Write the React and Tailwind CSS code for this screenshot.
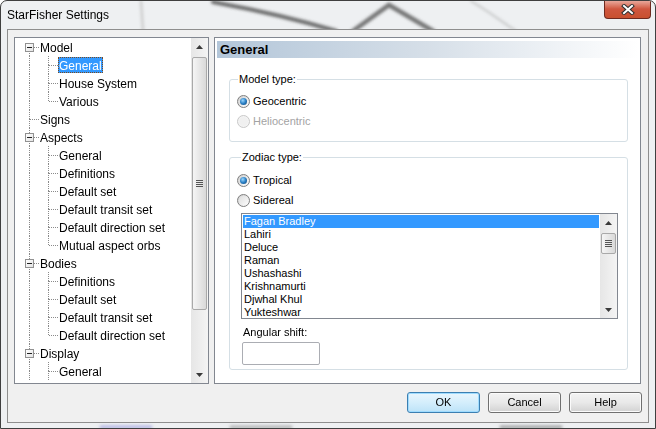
const tree = [
  { label: "Model", level: 0, exp: true, first: true },
  { label: "General", level: 1, sel: true },
  { label: "House System", level: 1 },
  { label: "Various", level: 1, last: true },
  { label: "Signs", level: 0 },
  { label: "Aspects", level: 0, exp: true },
  { label: "General", level: 1 },
  { label: "Definitions", level: 1 },
  { label: "Default set", level: 1 },
  { label: "Default transit set", level: 1 },
  { label: "Default direction set", level: 1 },
  { label: "Mutual aspect orbs", level: 1, last: true },
  { label: "Bodies", level: 0, exp: true },
  { label: "Definitions", level: 1 },
  { label: "Default set", level: 1 },
  { label: "Default transit set", level: 1 },
  { label: "Default direction set", level: 1, last: true },
  { label: "Display", level: 0, exp: true },
  { label: "General", level: 1 },
];

const zodiacs = [
  "Fagan Bradley",
  "Lahiri",
  "Deluce",
  "Raman",
  "Ushashashi",
  "Krishnamurti",
  "Djwhal Khul",
  "Yukteshwar",
];

function Slot({ top, bottom, branch, box }) {
  return (
    <span className="relative h-[18px] w-[19px] shrink-0">
      {top && (
        <span className="absolute left-[9px] top-0 h-[9px] border-l border-dotted border-[#8a8a8a]" />
      )}
      {bottom && (
        <span className="absolute left-[9px] top-[9px] h-[9px] border-l border-dotted border-[#8a8a8a]" />
      )}
      {branch && (
        <span className="absolute left-[10px] top-[9px] w-[9px] border-t border-dotted border-[#8a8a8a]" />
      )}
      {box && (
        <span className="absolute left-[5px] top-[5px] flex h-[9px] w-[9px] items-center justify-center border border-[#919191] bg-linear-to-br from-white to-[#e4e4e4]">
          <span className="h-px w-[5px] bg-[#222]" />
        </span>
      )}
    </span>
  );
}

function TreeRow({ item }) {
  return (
    <div className="flex h-[18px] items-center">
      {item.level === 0 ? (
        <Slot top={!item.first} bottom branch box={item.exp} />
      ) : (
        <>
          <Slot top bottom />
          <Slot top bottom={!item.last} branch />
        </>
      )}
      <span
        className={
          item.sel
            ? "flex h-[16px] items-center whitespace-nowrap border border-dotted border-[#7a4a20] bg-[#3399ff] pt-[1px] text-white"
            : "flex h-[16px] items-center whitespace-nowrap border border-transparent pt-[1px] text-black"
        }
      >
        {item.label}
      </span>
    </div>
  );
}

function Arrow({ down }) {
  return (
    <svg width="7" height="4" viewBox="0 0 7 4">
      <polygon
        points={down ? "0,0 7,0 3.5,4" : "0,4 7,4 3.5,0"}
        fill="#3a3a3a"
      />
    </svg>
  );
}

function Grip() {
  return (
    <span className="flex flex-col gap-[1px]">
      <span className="h-px w-[7px] bg-[#555]" />
      <span className="h-px w-[7px] bg-[#555]" />
      <span className="h-px w-[7px] bg-[#555]" />
      <span className="h-px w-[7px] bg-[#555]" />
    </span>
  );
}

function ScrollBar({ thumbTop, thumbHeight }) {
  return (
    <div className="flex w-[17px] shrink-0 flex-col bg-linear-to-r from-[#e6e6e6] to-[#f4f4f4]">
      <div className="flex h-[17px] shrink-0 items-center justify-center">
        <Arrow />
      </div>
      <div className="flex-1" style={{ paddingTop: thumbTop }}>
        <div
          className="mx-auto flex w-[15px] items-center justify-center rounded-[2px] border border-[#a9a9a9] bg-linear-to-r from-[#f5f5f5] to-[#d9d9d9]"
          style={{ height: thumbHeight }}
        >
          <Grip />
        </div>
      </div>
      <div className="flex h-[17px] shrink-0 items-center justify-center">
        <Arrow down />
      </div>
    </div>
  );
}

function Radio({ label, checked, disabled }) {
  return (
    <div className="flex h-[20px] items-center gap-[3px]">
      <span
        className={
          disabled
            ? "flex h-[13px] w-[13px] items-center justify-center rounded-full border border-[#c9c9c9] bg-[#f4f4f4]"
            : "flex h-[13px] w-[13px] items-center justify-center rounded-full border border-[#7f7f7f] bg-linear-to-br from-[#cfcfcf] to-[#ffffff]"
        }
      >
        {checked ? (
          <span className="h-[7px] w-[7px] rounded-full bg-radial-[at_40%_35%] from-[#9ad7ff] via-[#2a7fc4] to-[#0b3f72]" />
        ) : (
          <span
            className={
              disabled
                ? "h-[9px] w-[9px] rounded-full bg-[#f0f0f0]"
                : "h-[9px] w-[9px] rounded-full bg-linear-to-br from-[#dedede] to-[#fbfbfb]"
            }
          />
        )}
      </span>
      <span className={disabled ? "text-[#a3a3a3]" : "text-black"}>{label}</span>
    </div>
  );
}

function Button({ children, primary }) {
  return (
    <button
      className={
        primary
          ? "flex h-[21px] w-[73px] items-center justify-center rounded-[3px] border border-[#3c7fb1] bg-linear-to-b from-[#eaf6fd] via-[#d4eefc] to-[#bde3f8] text-black shadow-[inset_0_0_0_1px_#9fdcff]"
          : "flex h-[21px] w-[73px] items-center justify-center rounded-[3px] border border-[#707070] bg-linear-to-b from-[#f3f3f3] via-[#e9e9e9] to-[#d2d2d2] text-black shadow-[inset_0_0_0_1px_#fbfbfb]"
      }
    >
      {children}
    </button>
  );
}

export default function App() {
  return (
    <div
      className="relative h-[429px] w-[656px] overflow-hidden rounded-t-[7px] border border-[#3f3f3f] bg-[#eef0f2] text-[11px]"
      style={{ fontFamily: '"Liberation Sans", Arial, sans-serif' }}
    >
      <svg
        className="pointer-events-none absolute inset-0"
        width="656"
        height="429"
        viewBox="0 0 656 429"
      >
        <defs>
          <filter id="blur" x="-20%" y="-20%" width="140%" height="140%">
            <feGaussianBlur stdDeviation="1.4" />
          </filter>
        </defs>
        <g filter="url(#blur)" fill="none" strokeLinecap="round">
          <path d="M140 0 L142 30" stroke="#c4c4c4" strokeWidth="2" />
          <path d="M212 1 C 250 8, 295 18, 335 30" stroke="#4a4a4a" strokeWidth="4" opacity="0.8" />
          <path d="M352 30 L388 4 L432 30" stroke="#555" strokeWidth="4.5" opacity="0.8" />
          <path d="M470 0 C 490 12, 500 20, 515 30" stroke="#a8a8a8" strokeWidth="2" opacity="0.6" />
          <path d="M230 426 L 290 426" stroke="#8a8a8a" strokeWidth="3" opacity="0.6" />
          <path d="M500 426 L 560 426" stroke="#6a6a6a" strokeWidth="3" opacity="0.6" />
          <path d="M100 426 L 150 426" stroke="#8c8cd8" strokeWidth="3" opacity="0.6" />
        </g>
      </svg>

      <div className="relative flex h-[28px] items-center pl-[6px] text-[12px] text-black">
        StarFisher Settings
        <div className="absolute right-[4px] top-[-1px] flex h-[19px] w-[47px] items-center justify-center rounded-b-[4px] border border-t-0 border-[#6e2a20] bg-linear-to-b from-[#eab0a5] via-[#cf563f] to-[#c8502f]">
          <svg width="14" height="11" viewBox="0 0 14 11">
            <path d="M3 2 L11 9 M11 2 L3 9" stroke="#2f2f2f" strokeWidth="4" strokeLinecap="square" />
            <path d="M3 2 L11 9 M11 2 L3 9" stroke="#ffffff" strokeWidth="2" strokeLinecap="square" />
          </svg>
        </div>
      </div>

      <div className="relative mx-[6px] flex h-[394px] flex-col border border-[#8e8e8e] bg-[#f0f0f0] pt-[7px]">
        <div className="flex h-[347px] gap-[5px] pl-[6px]">
          <div className="flex w-[195px] border border-[#828790] bg-white text-[12px]">
            <div className="flex-1 overflow-hidden pl-[5px]">
              {tree.map((item, i) => (
                <TreeRow key={i} item={item} />
              ))}
            </div>
            <ScrollBar thumbTop={2} thumbHeight={253} />
          </div>

          <div className="flex w-[427px] flex-col border border-[#828790] bg-white px-[2px] pt-[3px]">
            <div className="flex h-[17px] items-center bg-linear-to-r from-[#b3c6d9] via-[#d6dfe8] to-[#ffffff] pl-[3px] text-[13px] font-bold text-black">
              General
            </div>
            <div className="pl-[12px] pr-[10px]">
              <fieldset className="mt-[15px] rounded-[3px] border border-[#d5dfe5] pb-[10px] pl-[7px] pt-[5px]">
                <legend className="ml-[1px] px-[1px] leading-[13px]">Model type:</legend>
                <Radio label="Geocentric" checked />
                <Radio label="Heliocentric" disabled />
              </fieldset>

              <fieldset className="mt-[9px] rounded-[3px] border border-[#d5dfe5] pb-[4px] pl-[7px] pt-[6px]">
                <legend className="ml-[4px] px-[1px] leading-[13px]">Zodiac type:</legend>
                <Radio label="Tropical" checked />
                <Radio label="Sidereal" />
                <div className="ml-[4px] mt-[3px] flex h-[106px] w-[377px] border border-[#828790] bg-white">
                  <div className="flex-1 overflow-hidden px-[1px] pt-[1px]">
                    {zodiacs.map((z, i) => (
                      <div
                        key={z}
                        className={
                          i === 0
                            ? "h-[13px] whitespace-nowrap bg-[#3399ff] pl-[1px] leading-[13px] text-white"
                            : "h-[13px] whitespace-nowrap pl-[1px] leading-[13px] text-black"
                        }
                      >
                        {z}
                      </div>
                    ))}
                  </div>
                  <ScrollBar thumbTop={2} thumbHeight={21} />
                </div>
                <div className="ml-[6px] mt-[7px] leading-[13px]">Angular shift:</div>
                <div className="ml-[5px] mt-[3px] h-[23px] w-[78px] rounded-[2px] border border-[#abadb3] bg-white" />
              </fieldset>
            </div>
          </div>
        </div>

        <div className="mt-[8px] flex justify-end gap-[8px] pr-[6px]">
          <Button primary>OK</Button>
          <Button>Cancel</Button>
          <Button>Help</Button>
        </div>
      </div>
    </div>
  );
}
